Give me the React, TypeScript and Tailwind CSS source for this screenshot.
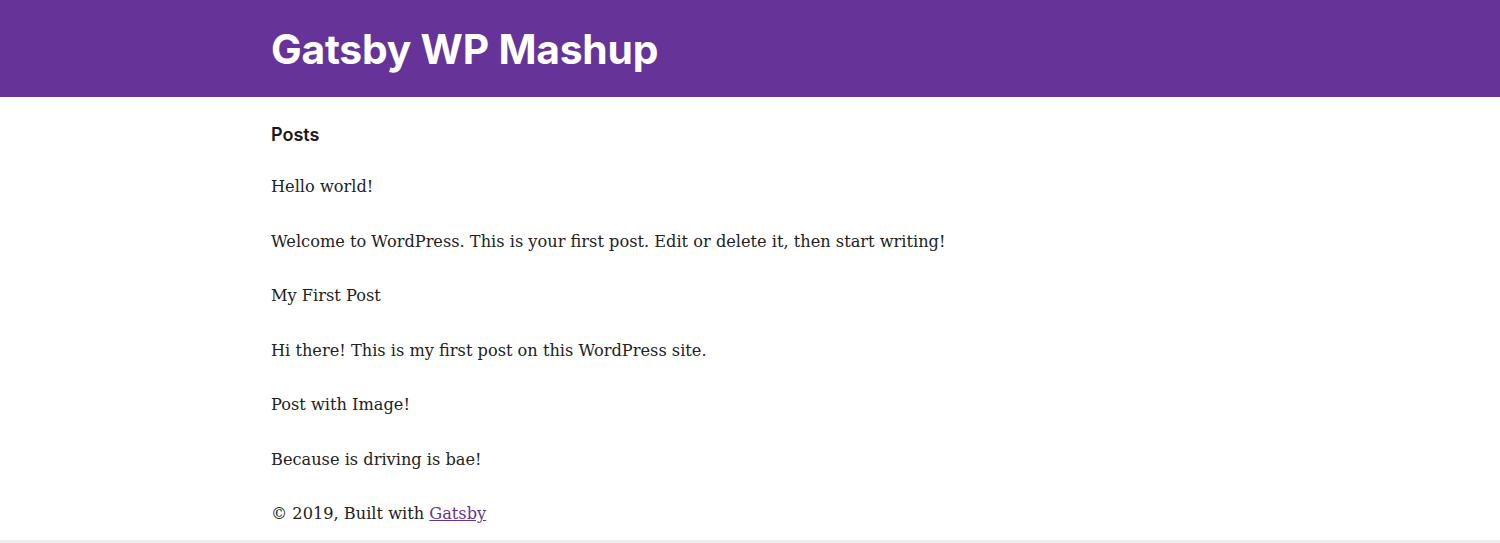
export default function App() {
  const posts = [
    { title: 'Hello world!', excerpt: 'Welcome to WordPress. This is your first post. Edit or delete it, then start writing!' },
    { title: 'My First Post', excerpt: 'Hi there! This is my first post on this WordPress site.' },
    { title: 'Post with Image!', excerpt: 'Because is driving is bae!' },
  ]

  return (
    <div className="min-h-[543px] bg-white border-b-[3px] border-[#ececec]">
      <header className="bg-[#663399] h-[97px]">
        <div className="mx-auto w-[958px] pt-[24px]">
          <h1 className="font-['Inter',sans-serif] font-bold text-white text-[40.8px] leading-[50px] tracking-[-0.2px]">
            Gatsby WP Mashup
          </h1>
        </div>
      </header>
      <main className="mx-auto w-[958px] pt-[26px] font-['DejaVu_Serif',serif] text-[#222] text-[16.2px]">
        <h4 className="font-['Inter',sans-serif] font-semibold text-[18px] leading-[24px] mb-[27px] text-[#1a1a1a]">
          Posts
        </h4>
        {posts.map((p) => (
          <div key={p.title}>
            <p className="leading-[26px] mb-[28.5px]">{p.title}</p>
            <p className="leading-[26px] mb-[28.5px]">{p.excerpt}</p>
          </div>
        ))}
        <footer className="leading-[26px]">
          © 2019, Built with{' '}
          <a href="#" className="text-[#663399] underline">
            Gatsby
          </a>
        </footer>
      </main>
    </div>
  )
}
